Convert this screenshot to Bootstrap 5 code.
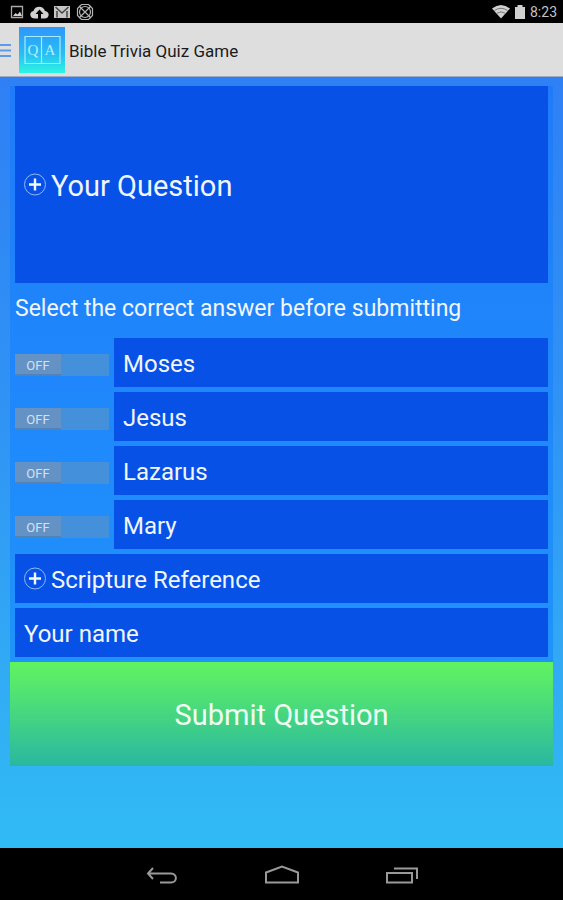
<!DOCTYPE html>
<html lang="en">
<head>
<meta charset="utf-8">
<meta name="viewport" content="width=device-width, initial-scale=1">
<title>Bible Trivia Quiz Game</title>
<link href="https://cdn.jsdelivr.net/npm/bootstrap@5.3.0/dist/css/bootstrap.min.css" rel="stylesheet">
<style>
  body { font-family: Roboto, "Liberation Sans", sans-serif; color: #f0f6ff; background: #000; }
  svg { display: block; flex: none; }
  .status-bar { height: 23px; padding: 0 6px 0 9px; background: #000; color: #c4c4c4; font-size: 14px; line-height: 24px; }
  .app-bar { height: 54px; background: #dedede; border-bottom: 1px solid #9eabc0; color: #1b1b1b; }
  .app-title { font-size: 17px; line-height: 26px; padding-top: 2px; font-weight: 400; }
  .screen { padding: 9px 10px; background: linear-gradient(#2f80f5, #3094f4 45%, #32a9f4 75%, #30bbf5); }
  .panel { padding: 0 5px 5px; background: linear-gradient(#1f7bfa, #1f93fc); }
  .field { background: #0751e6; }
  .field input { min-width: 0; padding: 0; border: 0; outline: 0; background: transparent; color: #f0f6ff; font-size: 24px; line-height: 32px; }
  .field input::placeholder { color: #f0f6ff; opacity: 1; }
  .field-line { height: 49px; padding: 2px 9px 0; }
  .field-question { height: 197px; padding: 2px 9px 0; }
  .field-question input { font-size: 29px; line-height: 40px; }
  .stack { display: flex; flex-direction: column; gap: 5px; }
  .answer { gap: 5px; }
  .hint { font-size: 23px; line-height: 32px; padding: 10px 0 13px; }
  .switch { width: 94px; height: 22px; margin-top: 4px; background: #4590da; cursor: pointer; }
  .switch span { width: 46px; height: 22px; background: #6492c4; border-bottom: 2px solid #5382b4; color: #d3e1f2; font-size: 13px; line-height: 24px; text-align: center; display: block; }
  .btn-check:checked + .switch span { margin-left: auto; background: #33b5e5; }
  .btn-check:focus-visible + .switch { outline: 2px solid #fff; }
  .submit { height: 104px; border: 0; border-radius: 0; background: linear-gradient(#60f360, #58ea6b 18%, #29b7a1); color: #effff4; font-size: 29px; line-height: 40px; padding-top: 8px; }
  .submit:hover { color: #fff; }
  .nav-bar { height: 52px; background: #000; gap: 72px; }
  .nav-bar button { width: 48px; height: 48px; padding: 0; border: 0; background: transparent; }
</style>
<script src="https://cdn.jsdelivr.net/npm/bootstrap@5.3.0/dist/js/bootstrap.bundle.min.js"></script>
</head>
<body class="min-vh-100 d-flex flex-column">
<div class="status-bar d-flex align-items-center justify-content-between">
  <svg width="88" height="23" viewBox="0 0 88 23" aria-hidden="true">
    <path d="M2.500 6.500h11v11h-11z" fill="none" stroke="#aaa" stroke-width="1.300"/>
    <path d="M4 16l2.500-3 2 1.500 2.500-3 2 4.500z" fill="#d0d0d0"/>
    <path d="M26 18.500c-6 0-6-7-1.500-7.500 1-5.500 10-6 11.500 0 5 .5 5 7.500-.5 7.500z" fill="#d0d0d0"/>
    <path d="M30.500 9.500l-4 4.500h2.500v5h3v-5h2.500z" fill="#000"/>
    <path d="M45 6h16v12H45z" fill="#c6c6c6"/>
    <path d="M46.500 7l6.500 6 6.500-6M48 17.500V11M58 17.500V11" fill="none" stroke="#444" stroke-width="1.500"/>
    <g fill="none" stroke="#b4b4b4" stroke-width="1.200"><path d="M72.500 4.500h7l4 4v7l-4 4h-7l-4-4v-7z"/><circle cx="76" cy="12" r="5.500"/><path d="M70 6l12 12M82 6L70 18"/></g>
  </svg>
  <div class="d-flex align-items-center">
    <svg width="38" height="23" viewBox="0 0 38 23" aria-hidden="true">
      <path d="M0 8.500Q9 1.500 18 8.500L9 18.500z" fill="#d0d0d0"/>
      <path d="M2.500 10.500Q9 6 15.500 10.500M5 13.200Q9 10.500 13 13.200" fill="none" stroke="#777" stroke-width="1"/>
      <path d="M23 7h2.500V5h5v2H33v12H23z" fill="#d0d0d0"/>
    </svg>
    <span>8:23</span>
  </div>
</div>

<header class="app-bar d-flex align-items-center">
  <button class="btn border-0 rounded-0 p-0 me-2" type="button" aria-label="Open menu">
    <svg width="11" height="18" viewBox="0 0 11 18" aria-hidden="true"><path d="M0 4h11M0 9.500h11M0 15h11" stroke="#5b9bea" stroke-width="2"/></svg>
  </button>
  <svg width="46" height="46" viewBox="0 0 46 46" aria-hidden="true">
    <defs><linearGradient id="logoFill" x1="0" y1="0" x2="0" y2="1"><stop offset="0" stop-color="#2f95fb"/><stop offset=".6" stop-color="#27c0f3"/><stop offset="1" stop-color="#2cf5e2"/></linearGradient></defs>
    <path d="M0 0h46v46H0z" fill="url(#logoFill)"/>
    <path d="M6 9.500h35v27H6zM22.500 9.500v27" fill="none" stroke="#a8ecff" stroke-width="1.200"/>
    <g fill="#b5efff" font-family="Liberation Serif, serif" font-size="15" text-anchor="middle"><text x="14" y="28">Q</text><text x="31" y="28">A</text></g>
  </svg>
  <h1 class="app-title mb-0 ms-1">Bible Trivia Quiz Game</h1>
</header>

<main class="screen flex-grow-1">
  <form>
    <div class="panel">
      <div class="field field-question d-flex align-items-center">
        <svg class="me-1" width="23" height="26" viewBox="0 0 23 26" aria-hidden="true"><circle cx="11" cy="11.500" r="10.500" fill="none" stroke="#8fb8fa" stroke-width="1"/><path d="M5 11.500h12M11 5.500v12" stroke="#f4f8ff" stroke-width="2.400"/></svg>
        <input class="flex-grow-1" type="text" placeholder="Your Question" aria-label="Your Question">
      </div>
      <p class="hint mb-0">Select the correct answer before submitting</p>
      <div class="stack">
        <div class="answer d-flex align-items-center">
          <input class="btn-check" type="checkbox" id="correct1" aria-label="Answer 1 is correct"><label class="switch" for="correct1"><span>OFF</span></label>
          <div class="field field-line d-flex align-items-center flex-grow-1"><input class="w-100" type="text" value="Moses" aria-label="Answer 1"></div>
        </div>
        <div class="answer d-flex align-items-center">
          <input class="btn-check" type="checkbox" id="correct2" aria-label="Answer 2 is correct"><label class="switch" for="correct2"><span>OFF</span></label>
          <div class="field field-line d-flex align-items-center flex-grow-1"><input class="w-100" type="text" value="Jesus" aria-label="Answer 2"></div>
        </div>
        <div class="answer d-flex align-items-center">
          <input class="btn-check" type="checkbox" id="correct3" aria-label="Answer 3 is correct"><label class="switch" for="correct3"><span>OFF</span></label>
          <div class="field field-line d-flex align-items-center flex-grow-1"><input class="w-100" type="text" value="Lazarus" aria-label="Answer 3"></div>
        </div>
        <div class="answer d-flex align-items-center">
          <input class="btn-check" type="checkbox" id="correct4" aria-label="Answer 4 is correct"><label class="switch" for="correct4"><span>OFF</span></label>
          <div class="field field-line d-flex align-items-center flex-grow-1"><input class="w-100" type="text" value="Mary" aria-label="Answer 4"></div>
        </div>
        <div class="field field-line d-flex align-items-center">
          <svg class="me-1" width="23" height="26" viewBox="0 0 23 26" aria-hidden="true"><circle cx="11" cy="11.500" r="10.500" fill="none" stroke="#8fb8fa" stroke-width="1"/><path d="M5 11.500h12M11 5.500v12" stroke="#f4f8ff" stroke-width="2.400"/></svg>
          <input class="flex-grow-1" type="text" placeholder="Scripture Reference" aria-label="Scripture Reference">
        </div>
        <div class="field field-line d-flex align-items-center"><input class="w-100" type="text" placeholder="Your name" aria-label="Your name"></div>
      </div>
    </div>
    <button class="btn submit w-100" type="submit">Submit Question</button>
  </form>
</main>

<nav class="nav-bar d-flex align-items-center justify-content-center" aria-label="System">
  <button type="button" aria-label="Back"><svg width="48" height="48" viewBox="0 0 48 48" fill="none" stroke="#999" stroke-width="2" aria-hidden="true"><path d="M15 18l-5 5.500 5 5.500M10 23.500h23c6.500 0 6.500 9 0 9H22"/></svg></button>
  <button type="button" aria-label="Home"><svg width="48" height="48" viewBox="0 0 48 48" fill="none" stroke="#999" stroke-width="2" aria-hidden="true"><path d="M8 22.500l16-6 16 6v10H8z"/></svg></button>
  <button type="button" aria-label="Recent apps"><svg width="48" height="48" viewBox="0 0 48 48" fill="none" stroke="#999" stroke-width="2" aria-hidden="true"><path d="M9 23h25v9.500H9zM16 18.500h23V29"/></svg></button>
</nav>
</body>
</html>
